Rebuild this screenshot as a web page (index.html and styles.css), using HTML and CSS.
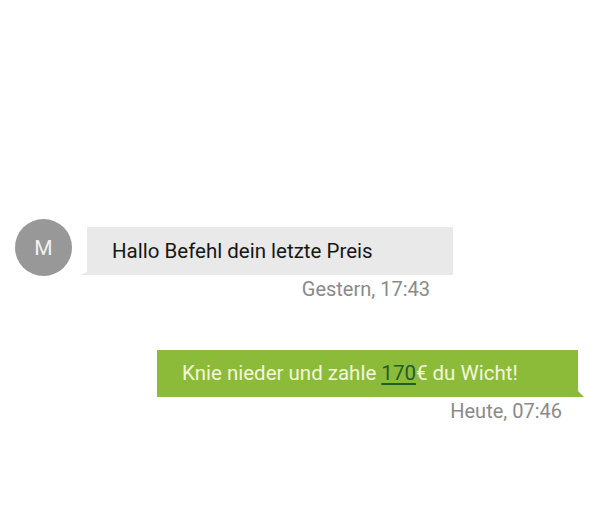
FILE: index.html
```html
<!DOCTYPE html>
<html lang="de">
<head>
    <meta charset="UTF-8">
    <meta name="viewport" content="width=device-width, initial-scale=1.0">
    <title>Chat</title>
    <link rel="stylesheet" href="styles.css">
</head>
<body>

<div class="chat">
    <div class="msg msg-in">
        <div class="avatar">M</div>
        <div class="msg-body">
            <div class="bubble bubble-in">Hallo Befehl dein letzte Preis</div>
            <div class="time time-in">Gestern, 17:43</div>
        </div>
    </div>

    <div class="msg msg-out">
        <div class="msg-body">
            <div class="bubble bubble-out">Knie nieder und zahle <span class="num">170</span>€ du Wicht!</div>
            <div class="time time-out">Heute, 07:46</div>
        </div>
    </div>
</div>

</body>
</html>
```

FILE: styles.css
```css
body {
    margin: 0;
    background-color: #ffffff;
    font-family: Roboto, "Noto Sans", sans-serif;
    width: 600px;
    height: 506px;
    overflow: hidden;
}
.chat {
    padding-top: 219px;
}
.msg {
    display: flex;
    align-items: flex-start;
}
.msg-in {
    padding-left: 15px;
}
.msg-out {
    padding-left: 157px;
    margin-top: 49px;
}
.avatar {
    width: 57px;
    height: 57px;
    border-radius: 50%;
    background-color: #989898;
    color: #f2f2f2;
    font-size: 21px;
    display: flex;
    align-items: center;
    justify-content: center;
    flex-shrink: 0;
}
.msg-body {
    display: flex;
    flex-direction: column;
}
.bubble {
    position: relative;
    box-sizing: border-box;
    font-size: 20.5px;
    white-space: nowrap;
}
.bubble-in {
    margin-top: 8px;
    margin-left: 15px;
    width: 366px;
    height: 48px;
    line-height: 48px;
    padding-left: 25px;
    background-color: #e9e9e9;
    color: #161616;
}
.bubble-in::after {
    content: "";
    position: absolute;
    left: -7px;
    bottom: 0;
    border-bottom: 3px solid #e9e9e9;
    border-left: 7px solid transparent;
}
.bubble-out {
    width: 421px;
    height: 47px;
    line-height: 47px;
    padding-left: 25px;
    background-color: #8cbb3a;
    color: #f3f6dc;
}
.bubble-out::after {
    content: "";
    position: absolute;
    right: -6px;
    bottom: 0;
    border-bottom: 6px solid #8cbb3a;
    border-right: 6px solid transparent;
}
.num {
    color: #1d5e2c;
    text-decoration: underline;
    text-underline-offset: 3px;
}
.time {
    color: #8a8a8a;
    font-size: 20px;
    text-align: right;
}
.time-in {
    margin-top: 2px;
    padding-right: 23px;
}
.time-out {
    margin-top: 2px;
    padding-right: 16px;
}
```
